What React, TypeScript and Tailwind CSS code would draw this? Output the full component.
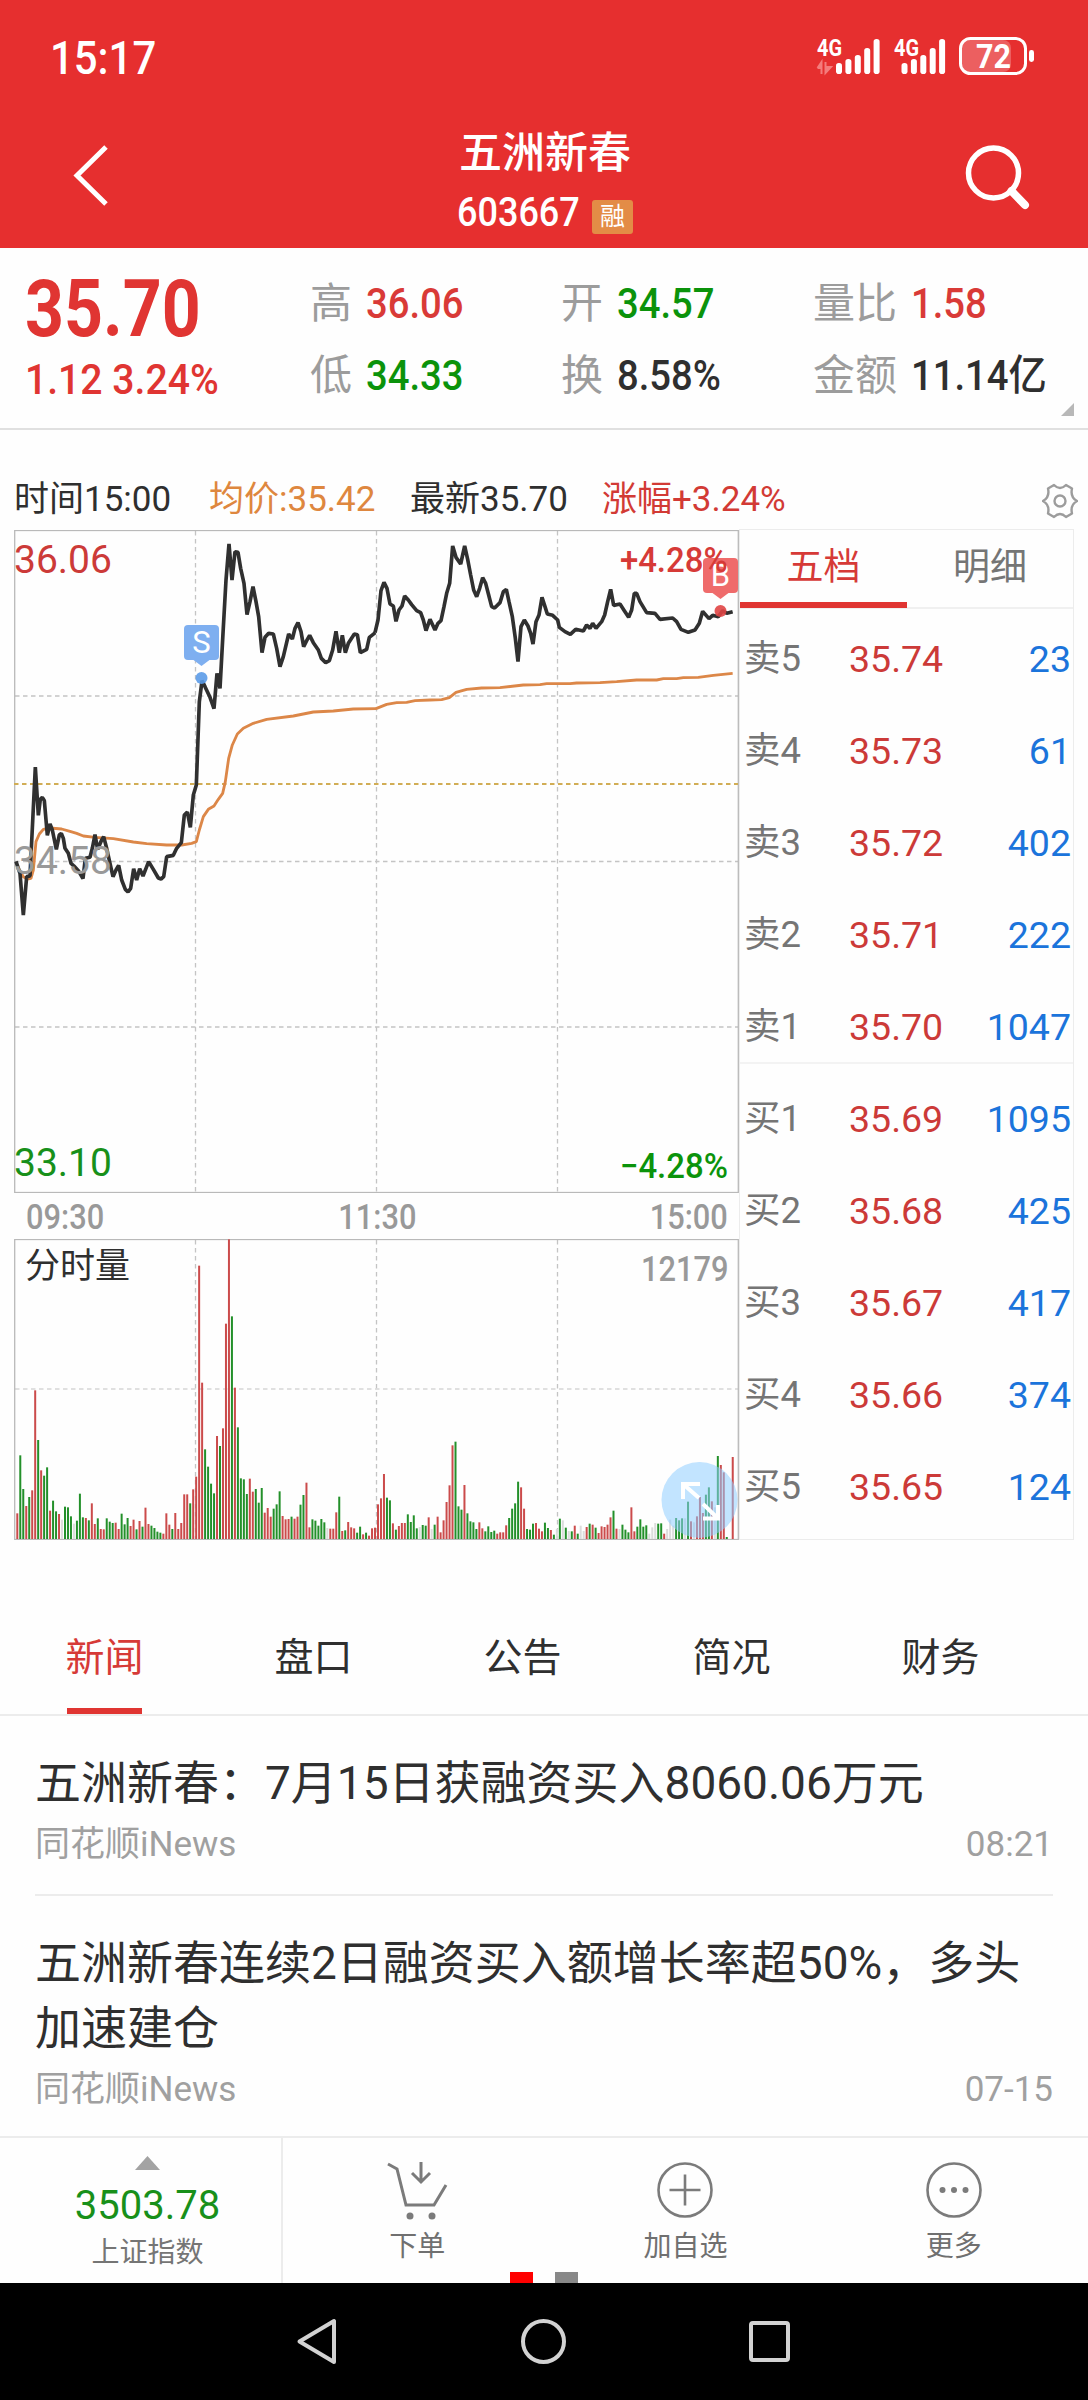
import type { ReactNode } from "react";

type Tone = "up" | "down" | "plain";

type Quote = { label: string; value: string; tone: Tone };

const toneClass: Record<Tone, string> = {
  up: "text-[#d93a37]",
  down: "text-[#0b930b]",
  plain: "text-[#2f2f2f]",
};

const quotes: Quote[] = [
  { label: "高", value: "36.06", tone: "up" },
  { label: "开", value: "34.57", tone: "down" },
  { label: "量比", value: "1.58", tone: "up" },
  { label: "低", value: "34.33", tone: "down" },
  { label: "换", value: "8.58%", tone: "plain" },
  { label: "金额", value: "11.14亿", tone: "plain" },
];

const sells = [
  ["卖5", "35.74", "23"],
  ["卖4", "35.73", "61"],
  ["卖3", "35.72", "402"],
  ["卖2", "35.71", "222"],
  ["卖1", "35.70", "1047"],
];

const buys = [
  ["买1", "35.69", "1095"],
  ["买2", "35.68", "425"],
  ["买3", "35.67", "417"],
  ["买4", "35.66", "374"],
  ["买5", "35.65", "124"],
];

const newsTabs = ["新闻", "盘口", "公告", "简况", "财务"];

const news = [
  { title: "五洲新春：7月15日获融资买入8060.06万元", time: "08:21" },
  { title: "五洲新春连续2日融资买入额增长率超50%，多头加速建仓", time: "07-15" },
];

// Price and average lines, one string per trading session
const priceMorning =
  "48,1024 60,1060 70,1185 80,1070 90,1068 106,741 115,886 121,838 127,832 133,842 142,946 150,912 157,930 169,988 178,945 184,940 190,955 195,985 205,1000 213,1030 222,1038 235,1052 249,1076 256,1015 270,1012 277,985 285,944 293,988 304,962 311,950 320,985 330,1030 339,1070 348,1050 356,1036 365,1080 376,1108 384,1116 392,1105 401,1046 410,1080 419,1046 429,1068 438,1045 446,1025 460,1048 475,1074 483,1077 491,1070 500,1010 520,1006 530,985 544,968 553,885 562,876 571,922 580,825 589,795 598,545 606,482 615,500 630,532 642,566 651,460 660,505 669,340 678,180 687,72 696,180 705,95 714,97 722,145 732,190 741,284 750,245 759,200 768,245 776,290 786,398 795,352 806,340 820,342 830,385 840,440 850,410 866,342 877,357 885,325 894,308 903,335 911,380 920,362 929,346 940,368 955,390 964,415 977,428 988,422 998,390 1008,334 1018,398 1027,346 1036,398 1045,370 1063,342 1072,344 1081,398 1100,388 1108,352 1126,338";
const priceAfternoon =
  "15,338 24,300 33,212 42,187 51,205 60,252 70,258 78,304 87,270 96,258 104,228 115,240 125,254 140,272 152,278 160,300 168,332 180,298 195,330 204,310 213,302 222,260 230,220 239,190 248,78 258,112 272,132 284,78 293,118 302,165 311,210 320,230 329,205 338,173 347,190 356,225 365,260 374,264 390,248 400,215 409,208 417,245 427,290 436,355 444,425 453,320 463,300 474,318 482,340 489,372 498,305 507,285 516,232 525,260 532,282 548,286 563,300 568,322 585,335 601,343 617,328 640,333 650,315 660,325 668,310 678,325 695,305 704,285 713,245 722,208 731,256 750,252 763,272 776,292 785,270 793,220 800,220 810,245 830,278 855,280 870,298 908,294 920,305 933,328 955,337 975,330 988,310 998,274 1017,296 1028,286 1045,290 1058,272 1070,280 1088,275";
const avgMorning =
  "52,1040 70,1070 82,1077 93,1075 100,1050 108,965 118,942 130,928 150,924 185,927 210,934 230,940 250,948 285,952 340,956 400,966 440,971 500,975 545,975 575,970 589,965 598,930 610,890 625,868 642,858 655,838 668,820 676,785 686,715 697,675 712,642 730,625 760,610 800,598 880,588 940,576 1000,573 1060,567 1130,566";
const avgAfternoon =
  "18,566 50,553 80,548 110,547 135,542 180,540 215,539 238,533 258,517 290,508 335,504 390,503 460,495 510,494 530,491 600,491 620,489 690,488 740,485 800,480 860,480 880,476 920,476 940,473 985,472 1030,466 1088,460";

// One bar per minute: colour key followed by height
const volumes =
  "r77 g251 g150 r99 g126 r146 r446 g297 r206 g190 g215 r85 g115 g83 r75 n58 g97 g95 g68 n46 g55 g136 g65 r63 g56 r107 r45 g62 r30 r29 g62 g52 g48 r49 r30 g76 g44 g63 r39 r58 g29 r54 g37 r94 r45 g40 g33 g22 g19 r16 r77 r43 g30 r78 r30 r48 r134 r134 g107 r149 r187 r820 r469 g269 g217 g166 g137 r309 g279 r332 r646 r899 g668 r454 g335 g182 g179 g135 r181 r142 g150 g109 g153 r79 r93 r67 g91 g104 g143 r69 r59 r60 g67 r61 r67 g103 g132 r169 r35 g59 g55 g40 g60 g50 n33 r31 r31 r80 g127 r24 g26 r51 r35 r32 g19 g37 r14 g19 r10 r32 r34 r104 r122 r195 g124 g116 r47 g28 r39 r48 r48 g74 g51 g71 g32 n36 g42 g40 r65 n30 g43 r67 r20 r56 r111 r161 r281 g292 g98 g88 r162 g77 g53 g50 g30 r50 r32 g23 g38 g21 g25 r16 r20 r20 r41 g63 g91 g107 g172 r155 r91 g30 g28 g46 r48 r31 r23 g49 g33 r27 g13 n30 g61 n56 g34 n24 g23 r40 g16 n40 n24 r36 g46 r43 g34 r18 r38 r36 r43 r65 g85 r31 n30 g43 g28 g20 r95 r23 g37 g59 g37 g41 n16 n35 n48 g46 g47 r16 n30 n58 n40 g63 g56 g62 n62 g112 r53 n50 r68 r126 r78 g133 g155 r113 n95 g249 r222 r200 g6 n0 r246".split(
    " "
  );

const barColor: Record<string, string> = {
  r: "#cb4b4b",
  g: "#23902a",
  n: "#dcdcdc",
};

const Signal = ({ x, arrows }: { x: number; arrows?: boolean }) => (
  <g transform={`translate(${x} 0)`}>
    {[11, 15, 19, 26, 35].map((h, i) => (
      <rect
        key={h}
        x={i * 9.4}
        y={37 - h}
        width={6}
        height={h}
        rx={2.8}
        fill="#fff"
      />
    ))}
    {arrows && (
      <path
        d="M-18.500 31 H-14.500 V25 L-18.500 31 M-14.500 25 V37 M-10.500 25 V36 L-5 30 H-10"
        stroke="#f47c7c"
        strokeWidth={2}
        fill="#f47c7c"
      />
    )}
  </g>
);

const StatusBar = () => (
  <div className="flex h-[115px] items-start justify-between pl-[50px] pr-[53px] pt-[37px] text-white">
    <div className="origin-left scale-x-[0.91] text-[46px] font-medium leading-[42px]">
      15:17
    </div>
    <svg
      className="overflow-visible"
      width={220}
      height={42}
      viewBox="0 0 220 42">
      <g
        fill="#fff"
        fontSize={23}
        fontWeight={700}
        className="font-['Roboto']">
        <text x={2} y={19} textLength={25} lengthAdjust="spacingAndGlyphs">
          4G
        </text>
        <text x={79} y={19} textLength={25} lengthAdjust="spacingAndGlyphs">
          4G
        </text>
      </g>
      <Signal x={21} arrows />
      <Signal x={86.500} />
      <rect x={147} y={3} width={49} height={32} rx={8} fill="#ec5f60" />
      <rect
        x={145.500}
        y={1.500}
        width={65}
        height={35}
        rx={10}
        fill="none"
        stroke="#fff"
        strokeWidth={3}
      />
      <rect x={214} y={13} width={5} height={12} rx={2.400} fill="#fff" />
      <text
        x={161}
        y={31}
        textLength={35}
        lengthAdjust="spacingAndGlyphs"
        fill="#fff"
        fontSize={33}
        fontWeight={700}
        className="font-['Roboto']">
        72
      </text>
    </svg>
  </div>
);

const TitleBar = () => (
  <div className="flex h-[133px] items-start justify-between pl-[70px] pr-[55px]">
    <svg className="mt-[26px]" width={42} height={68} viewBox="0 0 42 68">
      <path
        d="M36 6 L7 34.500 L36 63"
        fill="none"
        stroke="#fff"
        strokeWidth={5}
      />
    </svg>
    <div className="flex flex-col items-center pl-[15px] pt-[13px] text-white">
      <div className="text-[43px] font-medium leading-[50px]">五洲新春</div>
      <div className="flex items-center gap-[12px] pt-[13px]">
        <div className="w-[123px] leading-[44px]">
          <span className="inline-block origin-left scale-x-[0.9] text-[40px] font-medium">
            603667
          </span>
        </div>
        <div className="flex h-[34px] w-[41px] items-center justify-center rounded-[3px] bg-[#e38c46] pb-[2px] text-[25px] leading-none">
          融
        </div>
      </div>
    </div>
    <svg className="mt-[26px]" width={70} height={74} viewBox="0 0 70 74">
      <circle
        cx={30.500}
        cy={32}
        r={25}
        fill="none"
        stroke="#fff"
        strokeWidth={5.500}
      />
      <path
        d="M48.500 50 L62 64"
        stroke="#fff"
        strokeWidth={8}
        strokeLinecap="round"
      />
    </svg>
  </div>
);

const QuoteSummary = () => (
  <div className="relative flex h-[182px] border-b-2 border-[#e0e0e0] pl-[25px] pt-[22px]">
    <div className="w-[285px] text-[#e03532]">
      <div className="origin-left scale-x-[0.85] whitespace-nowrap text-[80px] font-bold leading-[78px]">
        35.70
      </div>
      <div className="mt-[9px] origin-left scale-x-[0.91] whitespace-nowrap text-[43px] font-medium leading-[44px]">
        1.12 3.24%
      </div>
    </div>
    <div className="grid grid-cols-[251px_252px_275px] content-start gap-y-[24px] pt-[10px]">
      {quotes.map(({ label, value, tone }) => (
        <div
          key={label}
          className="flex gap-[14px] whitespace-nowrap leading-[48px]">
          <span className="text-[42px] text-[#9c9c9c]">{label}</span>
          <span
            className={`origin-left scale-x-[0.91] text-[42px] font-medium ${toneClass[tone]}`}>
            {value}
          </span>
        </div>
      ))}
    </div>
    <svg
      className="absolute bottom-[12px] right-[14px]"
      width={13}
      height={13}
      viewBox="0 0 13 13">
      <path d="M13 0 V13 H0 Z" fill="#b8b8b8" />
    </svg>
  </div>
);

const InfoRow = () => (
  <div className="flex h-[99px] items-start pl-[14px] pr-[10px] pt-[48px] text-[35px] leading-[44px] text-[#2f2f2f]">
    <span className="w-[195px]">时间15:00</span>
    <span className="w-[201px] text-[#de873f]">均价:35.42</span>
    <span className="w-[192px]">最新35.70</span>
    <span className="text-[#d23a35]">涨幅+3.24%</span>
    <svg
      className="ml-auto mt-[5px]"
      width={36}
      height={36}
      viewBox="0 0 36 36"
      fill="none"
      stroke="#9c9c9c"
      strokeWidth={2.400}
      strokeLinejoin="round">
      <path d="M12 2 Q18 8 24 2 L30 5.500 Q28 14 35 18 Q28 22 30 30.500 L24 34 Q18 28 12 34 L6 30.500 Q8 22 1 18 Q8 14 6 5.500 Z" />
      <circle cx={18} cy={18} r={5.500} />
    </svg>
  </div>
);

type MarkerProps = {
  x: number;
  y: number;
  letter: string;
  fill: string;
  dot: string;
};

const Marker = ({ x, y, letter, fill, dot }: MarkerProps) => (
  <g transform={`translate(${x} ${y})`}>
    <rect x={-17.500} y={0} width={35} height={35} rx={4} fill={fill} />
    <path d="M-8 35 H8 L0 41 Z" fill={fill} />
    <text
      y={28}
      textAnchor="middle"
      fill="#fff"
      fontSize={31}
      className="font-['Roboto']">
      {letter}
    </text>
    <circle cy={53} r={6} fill={dot} fillOpacity={0.9} />
  </g>
);

const PriceChart = () => (
  <div className="relative h-[663px] w-[725px]">
    <svg width={725} height={663} viewBox="0 0 725 663">
      <g fill="none" stroke="#c4c4c4" strokeWidth={1.300}>
        <path
          d="M181.500 1 V662 M362.500 1 V662 M543.500 1 V662 M1 166 H724 M1 331.500 H724 M1 497 H724"
          strokeDasharray="4.500 3.500"
        />
        <rect x={0.700} y={0.500} width={723.600} height={662} stroke="#b9b9b9" />
      </g>
      <path
        d="M0 254 H724"
        stroke="#d1ad55"
        strokeWidth={1.800}
        strokeDasharray="4.500 3.500"
      />
      <g
        transform="scale(0.33333) translate(-42 -30)"
        fill="none"
        strokeLinejoin="bevel">
        <g stroke="#dc8748" strokeWidth={8.500}>
          <polyline points={avgMorning} />
          <polyline points={avgAfternoon} transform="translate(1110 0)" />
        </g>
        <g stroke="#303030" strokeWidth={11}>
          <polyline points={priceMorning} />
          <polyline points={priceAfternoon} transform="translate(1110 0)" />
        </g>
      </g>
      <Marker x={187.500} y={95} letter="S" fill="#7eaff0" dot="#5b9be8" />
      <Marker x={706.500} y={28} letter="B" fill="#ef6b6b" dot="#e04545" />
    </svg>
    <span className="absolute left-0 top-[8px] text-[39px] leading-[44px] text-[#cc3a38]">
      36.06
    </span>
    <span className="absolute left-0 top-[309px] text-[39px] leading-[44px] text-[#999]">
      34.58
    </span>
    <span className="absolute bottom-[8px] left-0 text-[39px] leading-[44px] text-[#18901a]">
      33.10
    </span>
    <span className="absolute right-[11px] top-[11px] origin-right scale-x-[0.94] text-[35px] font-medium leading-[40px] text-[#d63a37]">
      +4.28%
    </span>
    <span className="absolute bottom-[6px] right-[11px] origin-right scale-x-[0.94] text-[35px] font-medium leading-[40px] text-[#0b930b]">
      −4.28%
    </span>
  </div>
);

const VolumeChart = () => (
  <div className="relative h-[301px] w-[725px]">
    <svg width={725} height={301} viewBox="0 0 725 301">
      <g fill="none" stroke="#c4c4c4" strokeWidth={1.300}>
        <path
          d="M181.500 1 V300 M362.500 1 V300 M543.500 1 V300"
          strokeDasharray="4.500 3.500"
        />
        <path
          d="M1 150 H724"
          stroke="#d6d6d6"
          strokeWidth={1.600}
          strokeDasharray="4.500 3.500"
        />
        <rect x={0.700} y={0.500} width={723.600} height={300} stroke="#b9b9b9" />
      </g>
      {volumes.map((v, i) => {
        const h = Number(v.slice(1)) / 3;
        return (
          <rect
            key={i}
            x={2.300 + i * 2.981}
            y={300 - h}
            width={2}
            height={h}
            fill={barColor[v[0]]}
          />
        );
      })}
      <circle cx={685.500} cy={261} r={38} fill="#8fceff" fillOpacity={0.55} />
      <g fill="none" stroke="#fff" strokeWidth={4}>
        <path d="M669 260 V245 H686 M669 245 L685 259" />
        <path d="M704 266 V279.500 H689 M704 279.500 L689 265" />
      </g>
    </svg>
    <span className="absolute left-[11px] top-[6px] text-[35px] leading-[44px] text-[#2f2f2f]">
      分时量
    </span>
    <span className="absolute right-[11px] top-[11px] origin-right scale-x-[0.88] text-[35px] font-medium leading-[40px] text-[#999]">
      12179
    </span>
  </div>
);

const OrderRows = ({ rows }: { rows: string[][] }) => (
  <>
    {rows.map(([label, price, volume]) => (
      <div
        key={label}
        className="flex h-[92px] items-center pl-[4px] pr-[2px] pt-[22px] leading-[44px]">
        <span className="w-[105px] text-[36.500px] text-[#757575]">{label}</span>
        <span className="text-[37.500px] text-[#cc3a38]">{price}</span>
        <span className="ml-auto text-[37.500px] text-[#1b74db]">{volume}</span>
      </div>
    ))}
  </>
);

const OrderBook = () => (
  <div className="h-[1011px] w-[335px] border border-[#ececec]">
    <div className="flex h-[79px] border-b-2 border-[#f0f0f0] text-center text-[37px] leading-[76px]">
      <div className="h-[78px] w-[167px] border-b-[6px] border-[#e03532] text-[#d63a37]">
        五档
      </div>
      <div className="flex-1 text-[#757575]">明细</div>
    </div>
    <div className="-mt-[7px] border-b-2 border-[#f3f3f3]">
      <OrderRows rows={sells} />
    </div>
    <div className="-mt-[2px]">
      <OrderRows rows={buys} />
    </div>
  </div>
);

const NewsTabs = () => (
  <div className="mt-[54px] flex h-[122px] border-b-2 border-[#ececec]">
    {newsTabs.map((tab, i) => (
      <div
        key={tab}
        className="flex w-[209px] flex-col items-center justify-end text-[39px] leading-[48px]">
        <span
          className={`mb-[26px] ${i === 0 ? "text-[#d63a37]" : "text-[#2f2f2f]"}`}>
          {tab}
        </span>
        <span className={`h-[6px] w-[75px] ${i === 0 ? "bg-[#e03532]" : ""}`} />
      </div>
    ))}
  </div>
);

const NewsList = () => (
  <div className="h-[420px] px-[35px]">
    {news.map(({ title, time }, i) => (
      <div
        key={title}
        className={`pt-[35px] ${i === 0 ? "h-[180px] border-b-2 border-[#ececec]" : ""}`}>
        <div className="text-[46px] leading-[65px] text-[#2f2f2f]">{title}</div>
        <div className="flex justify-between text-[35px] leading-[57px] text-[#a0a0a0]">
          <span>同花顺iNews</span>
          <span>{time}</span>
        </div>
      </div>
    ))}
  </div>
);

const Action = ({ label, children }: { label: string; children: ReactNode }) => (
  <div className="flex flex-1 flex-col items-center pt-[21px]">
    <svg
      width={62}
      height={62}
      viewBox="0 0 62 62"
      fill="none"
      stroke="#7b7b7b"
      strokeWidth={2.600}>
      {children}
    </svg>
    <span className="text-[28px] leading-[52px] text-[#707070]">{label}</span>
  </div>
);

const BottomBar = () => (
  <div className="relative flex h-[147px] border-t-2 border-[#ececec]">
    <div className="flex w-[283px] flex-col items-center border-r-2 border-[#ececec] pl-[14px] pt-[18px]">
      <svg width={25} height={14} viewBox="0 0 25 14">
        <path d="M12.500 0 L25 14 H0 Z" fill="#a3a3a3" />
      </svg>
      <div className="mt-[12px] text-[40px] leading-[48px] text-[#18901a]">
        3503.78
      </div>
      <div className="text-[28px] leading-[46px] text-[#757575]">上证指数</div>
    </div>
    <Action label="下单">
      <path d="M2 5 L11 10 L20 46 H48 L60 26" strokeWidth={3} />
      <path d="M35 3 V22 M26 14 L35 23 L44 14" strokeWidth={3} />
      <circle cx={24} cy={57} r={3.500} fill="#7b7b7b" stroke="none" />
      <circle cx={46} cy={57} r={3.500} fill="#7b7b7b" stroke="none" />
    </Action>
    <Action label="加自选">
      <circle cx={31} cy={31} r={26.500} />
      <path d="M15.500 31 H46.500 M31 15.500 V46.500" />
    </Action>
    <Action label="更多">
      <circle cx={31} cy={31} r={26.500} />
      <g fill="#7b7b7b" stroke="none">
        <circle cx={19.500} cy={31} r={3} />
        <circle cx={31} cy={31} r={3} />
        <circle cx={42.500} cy={31} r={3} />
      </g>
    </Action>
    <div className="absolute bottom-0 left-[510px] flex gap-[22px]">
      <span className="h-[11px] w-[23px] bg-[#ff0000]" />
      <span className="h-[11px] w-[23px] bg-[#888]" />
    </div>
  </div>
);

const SystemNav = () => (
  <div className="flex h-[117px] items-start justify-center bg-black pt-[32px]">
    <svg
      width={500}
      height={52}
      viewBox="0 0 500 52"
      fill="none"
      stroke="#d2d2d2"
      strokeWidth={4}
      strokeLinejoin="round">
      <path d="M40 6 V47 L5.500 26.500 Z" />
      <circle cx={249.500} cy={26.500} r={20.500} />
      <rect x={457} y={8} width={37} height={37} rx={2} />
    </svg>
  </div>
);

export default function App() {
  return (
    <div className="h-[2400px] w-[1088px] overflow-hidden bg-[#fefefe] font-['Roboto','Noto_Sans_CJK_SC',sans-serif]">
      <header className="h-[248px] bg-[#e62f2f]">
        <StatusBar />
        <TitleBar />
      </header>
      <QuoteSummary />
      <InfoRow />
      <div className="flex pl-[14px]">
        <div className="pt-[1px]">
          <PriceChart />
          <div className="flex h-[46px] items-center justify-between pl-[12px] pr-[11px] pt-[4px] text-[35px] font-medium text-[#999]">
            <span className="origin-left scale-x-[0.88]">09:30</span>
            <span className="scale-x-[0.88]">11:30</span>
            <span className="origin-right scale-x-[0.88]">15:00</span>
          </div>
          <VolumeChart />
        </div>
        <OrderBook />
      </div>
      <NewsTabs />
      <NewsList />
      <BottomBar />
      <SystemNav />
    </div>
  );
}
